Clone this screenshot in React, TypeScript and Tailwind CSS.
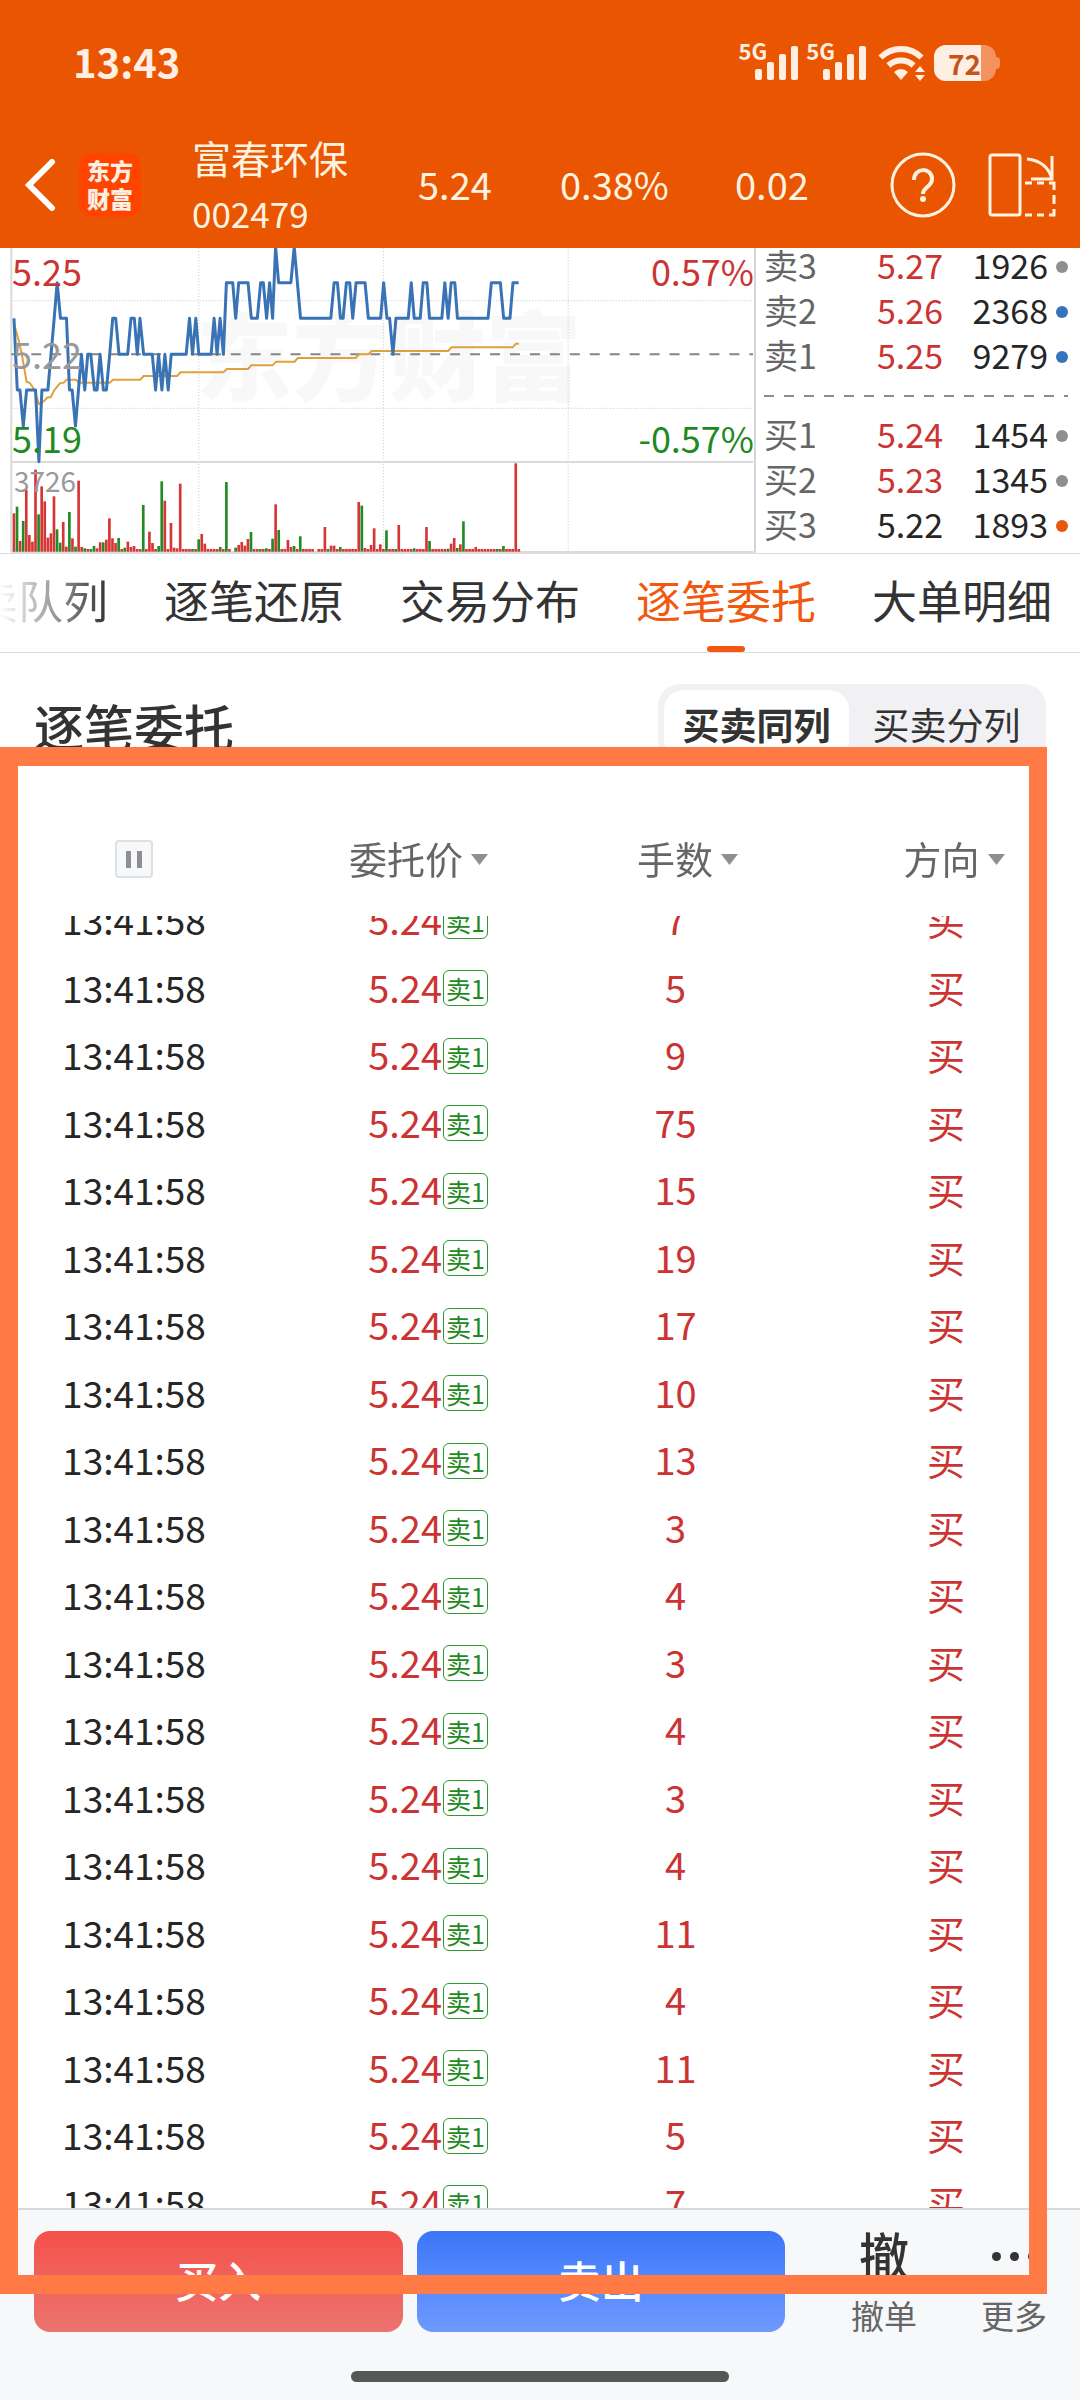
import { useLayoutEffect, useRef } from 'react';

type Level = { label: string; price: string; volume: string; tone: string; dot: string };

const RED = 'text-[#cb3432]';

const asks: Level[] = [
  { label: '卖3', price: '5.27', volume: '1926', tone: RED, dot: 'bg-[#8e8e93]' },
  { label: '卖2', price: '5.26', volume: '2368', tone: RED, dot: 'bg-[#3573bd]' },
  { label: '卖1', price: '5.25', volume: '9279', tone: RED, dot: 'bg-[#3573bd]' },
];

const bids: Level[] = [
  { label: '买1', price: '5.24', volume: '1454', tone: RED, dot: 'bg-[#8e8e93]' },
  { label: '买2', price: '5.23', volume: '1345', tone: RED, dot: 'bg-[#8e8e93]' },
  { label: '买3', price: '5.22', volume: '1893', tone: 'text-[#262626]', dot: 'bg-[#e6560c]' },
];

const tabs = ['买卖队列', '逐笔还原', '交易分布', '逐笔委托', '大单明细'];

const lots = [7, 5, 9, 75, 15, 19, 17, 10, 13, 3, 4, 3, 4, 3, 4, 11, 4, 11, 5, 7];

const priceLine =
  '42,220 52,435 60,435 70,543 80,435 107,435 117,650 126,435 144,435 163,220 172,113 182,220 200,220 209,435 217,435 227,543 245,328 255,435 264,328 273,328 284,435 292,435 301,328 311,435 320,435 330,328 339,220 348,220 358,328 384,328 394,220 404,220 413,328 421,220 432,328 458,328 468,435 477,328 487,435 496,328 506,435 515,328 560,328 570,220 579,328 589,220 598,328 635,328 644,220 653,328 662,220 672,328 681,113 700,113 709,220 718,113 746,113 756,220 774,220 784,113 792,113 802,220 811,113 820,220 829,5 838,113 875,113 885,5 904,220 995,220 1005,113 1015,113 1024,220 1032,220 1042,113 1052,113 1061,220 1071,113 1098,113 1108,220 1145,220 1154,113 1164,220 1172,220 1182,328 1191,220 1228,220 1237,113 1246,220 1264,220 1273,113 1284,113 1292,220 1329,220 1338,113 1348,220 1357,113 1368,113 1376,220 1468,220 1478,113 1505,113 1515,220 1534,220 1543,113 1560,113';

const averageLine =
  '42,235 56,285 66,330 80,411 88,413 98,425 107,445 117,477 133,468 142,458 153,456 163,436 180,415 192,413 200,404 228,404 237,413 330,413 340,404 422,404 432,393 533,393 543,382 672,382 682,372 746,372 756,361 820,361 830,350 886,350 896,339 1070,339 1080,328 1108,328 1118,318 1348,318 1358,307 1542,307 1552,296 1561,296';

// minute -> bar height, positive for up and negative for down
const volumeSpikes: Record<number, number> = {
  0: 115, 1: -135, 2: 32, 3: -92, 4: 185, 5: 50, 6: 30, 7: 246, 8: -112, 9: 196, 10: 151, 11: 42, 12: 55, 13: 166,
  14: 67, 15: -27, 16: 89, 17: 15, 18: -119, 19: 40, 20: -15, 21: 213, 22: 14, 23: -10, 26: -17, 27: 10, 28: 28,
  29: -28, 30: 36, 31: 100, 32: 40, 33: 26, 34: -41, 36: 12, 37: 30, 38: 14, 39: 17, 42: -140, 44: 60, 45: 26,
  47: 17, 48: -211, 49: 153, 51: 86, 52: 12, 53: 10, 54: 204, 60: -37, 61: 53, 62: 24, 67: -14, 69: 209, 71: 0,
  72: -12, 73: 20, 74: 29, 75: 18, 76: 38, 77: -59, 82: -10, 84: -39, 85: 142, 86: -65, 89: 35, 90: 14, 91: 17,
  93: -46, 98: 0, 101: 74, 103: 18, 104: 18, 106: -14, 112: 149, 113: 138, 114: 11, 116: 20, 117: 70, 119: 22,
  121: -64, 125: 80, 130: -10, 134: 74, 135: -32, 141: -9, 142: 24, 143: 41, 144: -11, 145: 22, 146: 91, 150: 14, 159: -17, 163: 265,
};

const volumes = Array.from({ length: 165 }, (_, i) => volumeSpikes[i] ?? 8);

function SignalBars() {
  return (
    <div className="flex items-start">
      <span className="-mr-3 -mt-2 text-[22px] leading-[24px] font-bold">5G</span>
      <svg className="h-[34px] w-[43px]" viewBox="0 0 43 34" fill="currentColor">
        <rect x="0" y="23" width="7" height="11" rx="2" />
        <rect x="12" y="16" width="7" height="18" rx="2" />
        <rect x="24" y="8" width="7" height="26" rx="2" />
        <rect x="36" y="0" width="7" height="34" rx="2" />
      </svg>
    </div>
  );
}

function StatusBar() {
  return (
    <div className="flex h-[125px] items-center justify-between pl-[73px] pr-[80px] text-[#ffeee2]">
      <span className="pb-[3px] text-[40px] font-bold">13:43</span>
      <div className="flex items-center gap-2">
        <SignalBars />
        <SignalBars />
        <svg className="ml-1 h-[36px] w-[48px]" viewBox="0 0 48 36" fill="none">
          <path d="M2.500 12.500a29 29 0 0 1 41 0" stroke="currentColor" strokeWidth="6" />
          <path d="M10.500 20.500a18 18 0 0 1 25 0" stroke="currentColor" strokeWidth="6" />
          <path d="M16 27q7-6 14 0l-7 8z" fill="currentColor" />
          <path d="M42 21l5 6H37zM42 36l5-6H37z" fill="currentColor" />
        </svg>
        <div className="flex items-center">
          <div className="flex h-[36px] w-[62px] items-center overflow-hidden rounded-[12px] bg-[#f4935f]">
            <span className="flex h-full w-[47px] items-center justify-end bg-[#ffeee2] text-[28px] leading-[36px] font-bold text-[#c4541a]">72</span>
          </div>
          <span className="h-3 w-1 rounded-r-sm bg-[#f4935f]" />
        </div>
      </div>
    </div>
  );
}

function StockBar() {
  return (
    <div className="flex h-[123px] items-center pr-[24px] pb-1 text-[#fff3e0]">
      <button aria-label="返回" className="ml-[25px] shrink-0">
        <svg className="h-[52px] w-[31px]" viewBox="0 0 31 52" fill="none" stroke="#fff" strokeWidth="6" strokeLinecap="round">
          <path d="M27 3L4 26L27 49" />
        </svg>
      </button>
      <div className="ml-[23px] flex h-[64px] w-[62px] shrink-0 flex-col justify-center rounded-[14px] bg-[#ff4400] pb-[2px] text-center text-[23px] leading-[28px] font-black text-[#ffeee2]">
        <span>东方</span>
        <span>财富</span>
      </div>
      <div className="ml-[51px] w-[226px] shrink-0">
        <div className="text-[39px] leading-[55px]">富春环保</div>
        <div className="text-[35px] leading-[55px]">002479</div>
      </div>
      <span className="w-[142px] shrink-0 pb-[2px] text-[38px]">5.24</span>
      <span className="w-[175px] shrink-0 pb-[2px] text-[38px]">0.38%</span>
      <span className="pb-[2px] text-[38px]">0.02</span>
      <div className="ml-auto flex items-center gap-[32px]">
        <button aria-label="帮助">
          <svg className="h-[66px] w-[66px]" viewBox="0 0 66 66" fill="none" stroke="currentColor">
            <circle cx="33" cy="33" r="31" strokeWidth="3" />
            <path d="M24 28c0-13 18-13 18-1c0 8-9 8-9 15" strokeWidth="4" />
            <circle cx="33" cy="47" r="3" fill="currentColor" stroke="none" />
          </svg>
        </button>
        <button aria-label="横屏">
          <svg className="h-[66px] w-[68px]" viewBox="0 0 68 66" fill="none" stroke="currentColor" strokeWidth="3">
            <rect x="2" y="3" width="30" height="60" rx="2" />
            <path d="M39 7q20 2 25 20M64 4v23H43" />
            <path d="M37 31h7m5 0h7m5 0h5v7m0 5v9m0 5v6h-5m-5 0h-7m-5 0h-7" />
          </svg>
        </button>
      </div>
    </div>
  );
}

function PriceChart() {
  return (
    <div className="relative w-[70%] border-r-2 border-[#d4d4d4] text-[36px] leading-[36px]">
      <svg className="block h-[305px] w-full" viewBox="0 9 2268 915" preserveAspectRatio="none" fill="none">
        <text x="590" y="444" fontSize="290" fontWeight="900" fill="#f8f8f8">东方财富</text>
        <g stroke="#d2d2d2" strokeWidth="3" strokeDasharray="4 5">
          <path d="M34 167H2265M34 490H2265M598 9V918M1153 9V918M1709 9V918" />
        </g>
        <path d="M34 9V920M34 651H2265M34 921H2265" stroke="#dadada" strokeWidth="6" />
        <path d="M34 328H2265" stroke="#858585" strokeWidth="6" strokeDasharray="30 30" />
        {volumes.map((v, i) => (
          <rect
            key={i}
            x={38 + i * 9.26}
            y={920 - Math.abs(v)}
            width="8"
            height={Math.abs(v)}
            fill={v < 0 || i % 11 === 3 ? '#238a23' : '#d63535'}
          />
        ))}
        <polyline points={averageLine} stroke="#dfa03f" strokeWidth="6" />
        <polyline points={priceLine} stroke="#3973b5" strokeWidth="9" strokeLinejoin="round" />
      </svg>
      <span className={`absolute top-1 left-3 ${RED}`}>5.25</span>
      <span className="absolute top-[87px] left-3 text-[#999]">5.22</span>
      <span className="absolute top-[171px] left-3 text-[#1f8a1f]">5.19</span>
      <span className={`absolute top-1 right-0 ${RED}`}>0.57%</span>
      <span className="absolute top-[171px] right-0 text-[#1f8a1f]">-0.57%</span>
      <span className="absolute top-[214px] left-[14px] text-[28px] text-[#999]">3726</span>
    </div>
  );
}

function Levels({ levels }: { levels: Level[] }) {
  return (
    <ul>
      {levels.map((l) => (
        <li key={l.label} className="flex h-[45px] items-center text-[34px] leading-[42px]">
          <span className="pb-[3px] text-[#666]">{l.label}</span>
          <span className={`ml-auto pb-[3px] ${l.tone}`}>{l.price}</span>
          <span className="w-[105px] pb-[3px] text-right text-[#262626]">{l.volume}</span>
          <span className={`ml-2 h-3 w-3 rounded-full ${l.dot}`} />
        </li>
      ))}
    </ul>
  );
}

function TabBar() {
  return (
    <nav className="flex h-[99px] shrink-0 justify-end gap-[56px] overflow-hidden border-b border-[#dcdcdc] pr-[28px] text-[45px]">
      {tabs.map((tab, i) => (
        <button
          key={tab}
          className={
            tab === '逐笔委托'
              ? 'flex shrink-0 flex-col items-center text-[#f0590f]'
              : i === 0
                ? 'flex shrink-0 flex-col items-center bg-linear-to-r from-transparent from-40% to-[#333] bg-clip-text text-transparent'
                : 'flex shrink-0 flex-col items-center text-[#333]'
          }
        >
          <span className="leading-[92px]">{tab}</span>
          {tab === '逐笔委托' && <span className="h-[6px] w-[38px] rounded-full bg-[#f0590f]" />}
        </button>
      ))}
    </nav>
  );
}

function SortHeader({ label }: { label: string }) {
  return (
    <button className="inline-flex items-center gap-2">
      <span className="pb-1">{label}</span>
      <svg className="h-[11px] w-[17px]" viewBox="0 0 17 11" fill="#8e8e93">
        <path d="M0 0h17L8.500 11z" />
      </svg>
    </button>
  );
}

function OrderList() {
  const listRef = useRef<HTMLDivElement>(null);

  useLayoutEffect(() => {
    if (listRef.current) listRef.current.scrollTop = 29;
  }, []);

  return (
    <div ref={listRef} className="min-h-0 flex-1 overflow-hidden pr-[51px]">
      <table className="w-full table-fixed text-center">
        <thead className="sticky top-0 z-10 bg-white text-[38px] text-[#666]">
          <tr className="h-[150px]">
            <th className="w-[268px] pt-9 font-normal">
              <button aria-label="暂停" className="mx-auto flex h-[38px] w-[38px] items-center justify-center gap-[6px] rounded-[4px] border-2 border-[#dde0e4] bg-[#f6f8fa]">
                <span className="h-[17px] w-[5px] bg-[#8e8e93]" />
                <span className="h-[17px] w-[5px] bg-[#8e8e93]" />
              </button>
            </th>
            <th className="w-[220px] pt-9 text-right font-normal"><SortHeader label="委托价" /></th>
            <th className="pt-9 pl-[24px] font-normal"><SortHeader label="手数" /></th>
            <th className="w-[166px] pt-9 pl-[16px] font-normal"><SortHeader label="方向" /></th>
          </tr>
        </thead>
        <tbody className="text-[38px] leading-[56px]">
          {lots.map((n, i) => (
            <tr key={i} className="odd:h-[67px] even:h-[68px]">
              <td className="pb-[3px] text-[37px] text-[#262626]">13:41:58</td>
              <td className={RED}>
                <div className="flex items-center justify-end gap-px">
                  <span className="pb-[3px]">5.24</span>
                  <span className="flex h-[36px] w-[45px] items-center justify-center rounded-[6px] border border-[#2c9a2c] text-[25px] leading-[34px] text-[#1f8a1f]">卖1</span>
                </div>
              </td>
              <td className={`pb-[3px] ${RED}`}>{n}</td>
              <td className={`pb-[3px] ${RED}`}>买</td>
            </tr>
          ))}
        </tbody>
      </table>
    </div>
  );
}

function TradeBar() {
  return (
    <footer className="h-[192px] shrink-0 border-t-2 border-[#d6d9dc] bg-[#f6f8fa]">
      <div className="flex pt-[21px] pr-[33px] pl-[34px]">
        <div className="flex flex-1 gap-[14px] text-[43px] font-medium text-white">
          <button className="h-[101px] flex-1 rounded-[16px] bg-linear-to-b from-[#f4504a] to-[#ec736e] pb-1">买入</button>
          <button className="h-[101px] flex-1 rounded-[16px] bg-linear-to-b from-[#3b76f8] to-[#6e9aff] pb-1">卖出</button>
        </div>
        <button className="ml-[66px] flex flex-col items-center text-[33px] leading-[44px] text-[#666]">
          <span className="h-[62px] text-[50px] font-medium text-[#333]">撤</span>
          撤单
        </button>
        <button className="ml-[64px] flex flex-col items-center text-[33px] leading-[44px] text-[#666]">
          <span className="flex h-[62px] gap-[9px] pt-[21px]">
            <span className="h-[9px] w-[9px] rounded-full bg-[#333]" />
            <span className="h-[9px] w-[9px] rounded-full bg-[#333]" />
            <span className="h-[9px] w-[9px] rounded-full bg-[#333]" />
          </span>
          更多
        </button>
      </div>
      <div className="mx-auto mt-[34px] h-[11px] w-[35%] rounded-full bg-[#555855]" />
    </footer>
  );
}

export default function App() {
  return (
    <div className="relative flex h-screen flex-col overflow-hidden bg-white font-['Noto_Sans_CJK_SC',sans-serif]">
      <header className="shrink-0 bg-[#e95500]">
        <StatusBar />
        <StockBar />
      </header>

      {/* Chart + order book */}
      <section className="flex h-[306px] shrink-0 overflow-hidden border-b border-[#dcdcdc]">
        <PriceChart />
        <div className="-mt-1 flex-1 pr-3 pl-2">
          <Levels levels={asks} />
          <div className="my-4 h-[2px] bg-[repeating-linear-gradient(to_right,#8c8c8c_0_10px,transparent_10px_20px)]" />
          <Levels levels={bids} />
        </div>
      </section>

      <TabBar />

      {/* Section title */}
      <div className="flex shrink-0 items-center justify-between pt-[31px] pr-[34px] pl-[34px] text-[#333]">
        <h2 className="text-[50px] leading-[82px] font-medium">逐笔委托</h2>
        <div className="flex h-[82px] rounded-[22px] bg-[#f1f1f4] p-[6px] text-[37px]">
          <button className="w-[185px] rounded-[20px] bg-white font-bold">买卖同列</button>
          <button className="w-[191px] pl-1">买卖分列</button>
        </div>
      </div>

      <OrderList />
      <TradeBar />

      {/* Highlight frame */}
      <div className="pointer-events-none absolute top-[747px] right-[33px] bottom-[106px] left-0 z-20 border-x-[18px] border-y-[19px] border-[#ff7a45]" />
    </div>
  );
}
